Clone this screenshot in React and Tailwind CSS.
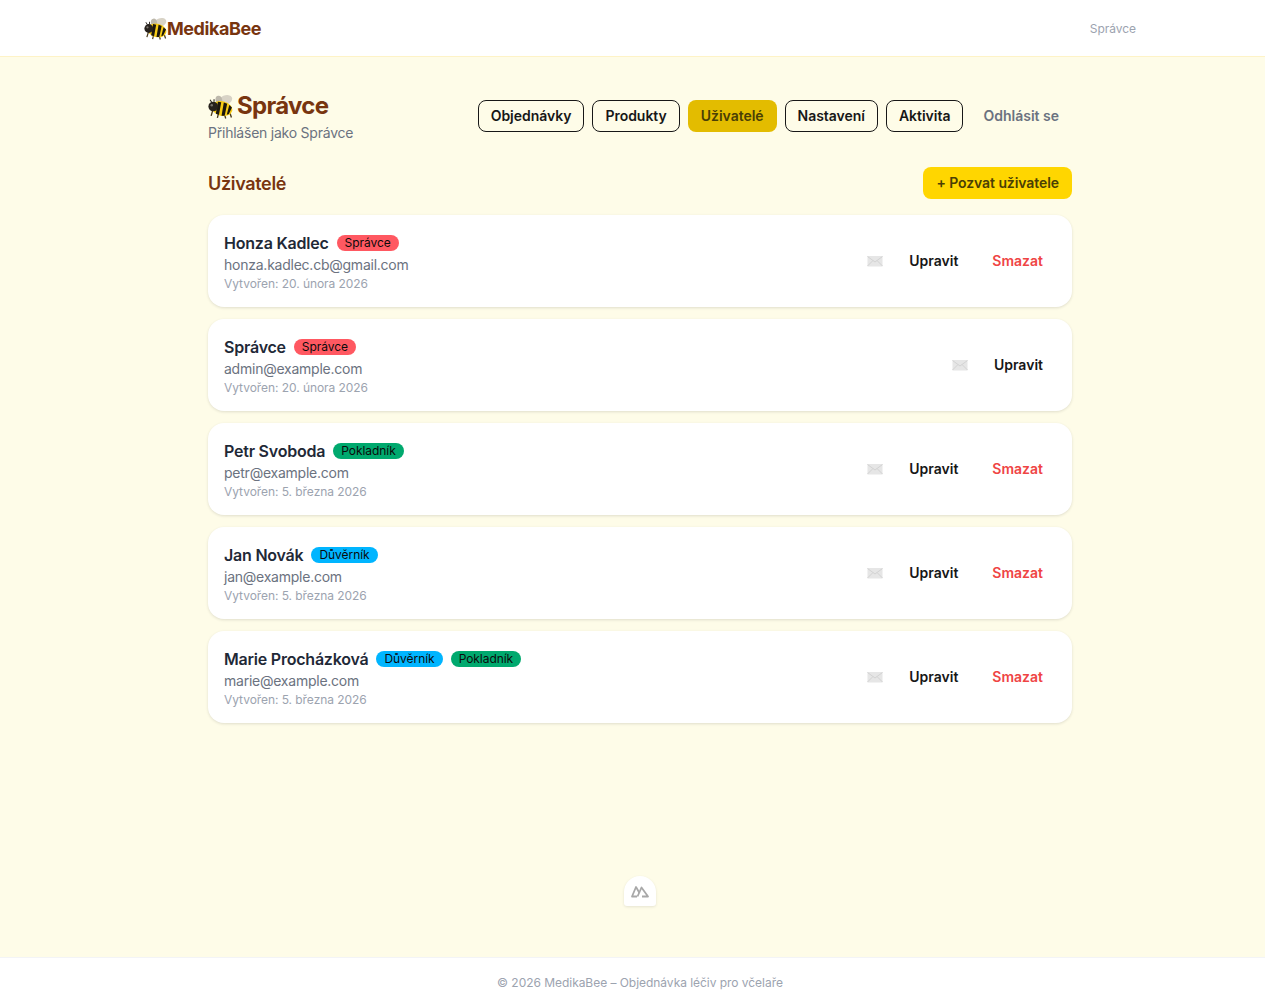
import React from 'react';

const Bee = ({ size = 24 }) => (
  <svg width={size} height={size} viewBox="0 0 24 24" className="shrink-0">
    <ellipse cx="16.5" cy="6" rx="7" ry="4.6" transform="rotate(-22 16.5 6)" fill="#d8d3c6" />
    <ellipse cx="10.5" cy="6" rx="3.2" ry="4.4" transform="rotate(-12 10.5 6)" fill="#bdb8ab" />
    <path d="M4.5 16l-1.5 5M10 19l-1 4M16 20l1 3.5M21 18l1.5 4.5" stroke="#4a3a1c" strokeWidth="1.3" fill="none" />
    <ellipse cx="13.5" cy="14" rx="10" ry="7" transform="rotate(14 13.5 14)" fill="#f8cc14" />
    <path d="M9.5 7.4L7.5 19l3 1.2 2.2-12.2zM15.2 8.2L13 20.8l3 .1 2.4-11.6zM20.4 10.6L18 20l2 -.8 3-6.2z" fill="#1c170f" />
    <circle cx="5" cy="12" r="4.6" fill="#26211c" />
    <circle cx="3.6" cy="10.8" r="1.2" fill="#77726b" />
    <path d="M3.5 8L2 5.5M5.8 7.5L5.8 5" stroke="#26211c" strokeWidth="1" fill="none" />
  </svg>
);

const Mail = () => (
  <svg width="16" height="12" viewBox="0 0 16 12" className="shrink-0">
    <rect x="0.5" y="1" width="15" height="10.5" fill="#e6e6e6" />
    <path d="M0.5 1.5L8 7l7.5-5.5M0.5 11l5.5-5.5M15.5 11L10 5.5" stroke="#d2d2d2" strokeWidth="1" fill="none" />
  </svg>
);

const badgeColors = {
  'Správce': 'bg-[#ff5861]',
  'Pokladník': 'bg-[#00a96e]',
  'Důvěrník': 'bg-[#00b5ff]',
};

const users = [
  { name: 'Honza Kadlec', roles: ['Správce'], email: 'honza.kadlec.cb@gmail.com', created: '20. února 2026', canDelete: true },
  { name: 'Správce', roles: ['Správce'], email: 'admin@example.com', created: '20. února 2026', canDelete: false },
  { name: 'Petr Svoboda', roles: ['Pokladník'], email: 'petr@example.com', created: '5. března 2026', canDelete: true },
  { name: 'Jan Novák', roles: ['Důvěrník'], email: 'jan@example.com', created: '5. března 2026', canDelete: true },
  { name: 'Marie Procházková', roles: ['Důvěrník', 'Pokladník'], email: 'marie@example.com', created: '5. března 2026', canDelete: true },
];

const tabs = ['Objednávky', 'Produkty', 'Uživatelé', 'Nastavení', 'Aktivita'];

const UserCard = ({ user }) => (
  <div className="bg-white rounded-2xl shadow-[0_1px_3px_rgba(0,0,0,0.12)] h-[92px] px-4 flex items-center justify-between">
    <div>
      <div className="flex items-center gap-2 h-6">
        <span className="text-base font-semibold tracking-[-0.22px] text-[#1f2937]">{user.name}</span>
        {user.roles.map(role => (
          <span key={role} className={`${badgeColors[role]} rounded-full px-2 h-4 mt-px flex items-center text-xs leading-4 tracking-[-0.05px] text-[#0b0b0b]`}>{role}</span>
        ))}
      </div>
      <p className="text-sm leading-5 tracking-[-0.24px] text-[#6b7280]">{user.email}</p>
      <p className="text-xs leading-4 mt-px tracking-[-0.06px] text-[#9ca3af]">Vytvořen: {user.created}</p>
    </div>
    <div className="flex items-center">
      <Mail />
      <span className="ml-[14px] px-3 text-sm leading-8 font-semibold text-[#171717]">Upravit</span>
      {user.canDelete && <span className="ml-[10px] px-3 text-sm leading-8 font-semibold text-[#ef4444]">Smazat</span>}
      <span className="w-px" />
    </div>
  </div>
);

export default function App() {
  return (
    <div className="w-full h-[1006px] overflow-hidden bg-[#fefce8] font-['Inter',sans-serif]">
      <div className="w-[1280px] h-full relative flex flex-col">
        <header className="bg-white border-b border-[#fef3c7] h-[57px] shrink-0">
          <div className="mx-[144px] h-14 pt-px flex items-center justify-between">
            <div className="flex items-center">
              <Bee size={23} />
              <span className="text-lg font-bold tracking-[-0.44px] text-[#78350f]">MedikaBee</span>
            </div>
            <span className="text-xs tracking-[-0.03px] text-[#9ca3af]">Správce</span>
          </div>
        </header>

        <main className="flex-1 mx-[208px] pt-[33px]">
          <div className="flex items-start justify-between h-[63px]">
            <div>
              <h1 className="flex items-center gap-[4px] text-2xl font-bold tracking-[-0.7px] text-[#78350f] h-8">
                <Bee size={25} />
                Správce
              </h1>
              <p className="text-sm leading-5 mt-px tracking-[-0.23px] text-[#6b7280]">Přihlášen jako Správce</p>
            </div>
            <div className="flex items-center gap-2 mt-[10px]">
              {tabs.map(tab => (
                tab === 'Uživatelé'
                  ? <span key={tab} className="h-8 px-[13px] flex items-center rounded-lg bg-[#e3bc00] text-sm font-semibold tracking-[-0.03px] text-[#4a3f05]">{tab}</span>
                  : <span key={tab} className="h-8 px-3 flex items-center rounded-lg border border-[#171717] text-sm font-semibold tracking-[-0.03px] text-[#171717]">{tab}</span>
              ))}
              <span className="h-8 pl-3 pr-[13px] flex items-center text-sm font-semibold text-[#6b7280]">Odhlásit se</span>
            </div>
          </div>

          <div className="flex items-center justify-between mt-[14px] h-8">
            <h2 className="text-lg font-semibold tracking-[-0.33px] pt-px text-[#78350f]">Uživatelé</h2>
            <span className="h-8 px-[13px] flex items-center rounded-lg bg-[#ffd600] text-sm font-semibold tracking-[-0.08px] text-[#4a3f05]">+ Pozvat uživatele</span>
          </div>

          <div className="flex flex-col gap-3 mt-4">
            {users.map(user => <UserCard key={user.email} user={user} />)}
          </div>
        </main>

        <footer className="bg-white border-t border-[#f3f4f6] h-[49px] shrink-0 pt-[15px] text-center text-xs leading-5 tracking-[-0.04px] text-[#9ca3af]">
          © 2026 MedikaBee – Objednávka léčiv pro včelaře
        </footer>

        <div className="absolute left-[624px] top-[876px] w-8 h-[30px] bg-white rounded-t-2xl rounded-b-[3px] shadow-[0_1px_3px_rgba(0,0,0,0.1)] flex items-center justify-center">
          <svg width="18" height="13" viewBox="0 0 18 13" fill="none" stroke="#a8a8a8" strokeWidth="1.8" strokeLinejoin="round">
            <path d="M6 11.5H1L5 2l3.5 6" />
            <path d="M6.5 11.5L10.5 2.5 17 11.5H11" />
          </svg>
        </div>
      </div>
    </div>
  );
}
